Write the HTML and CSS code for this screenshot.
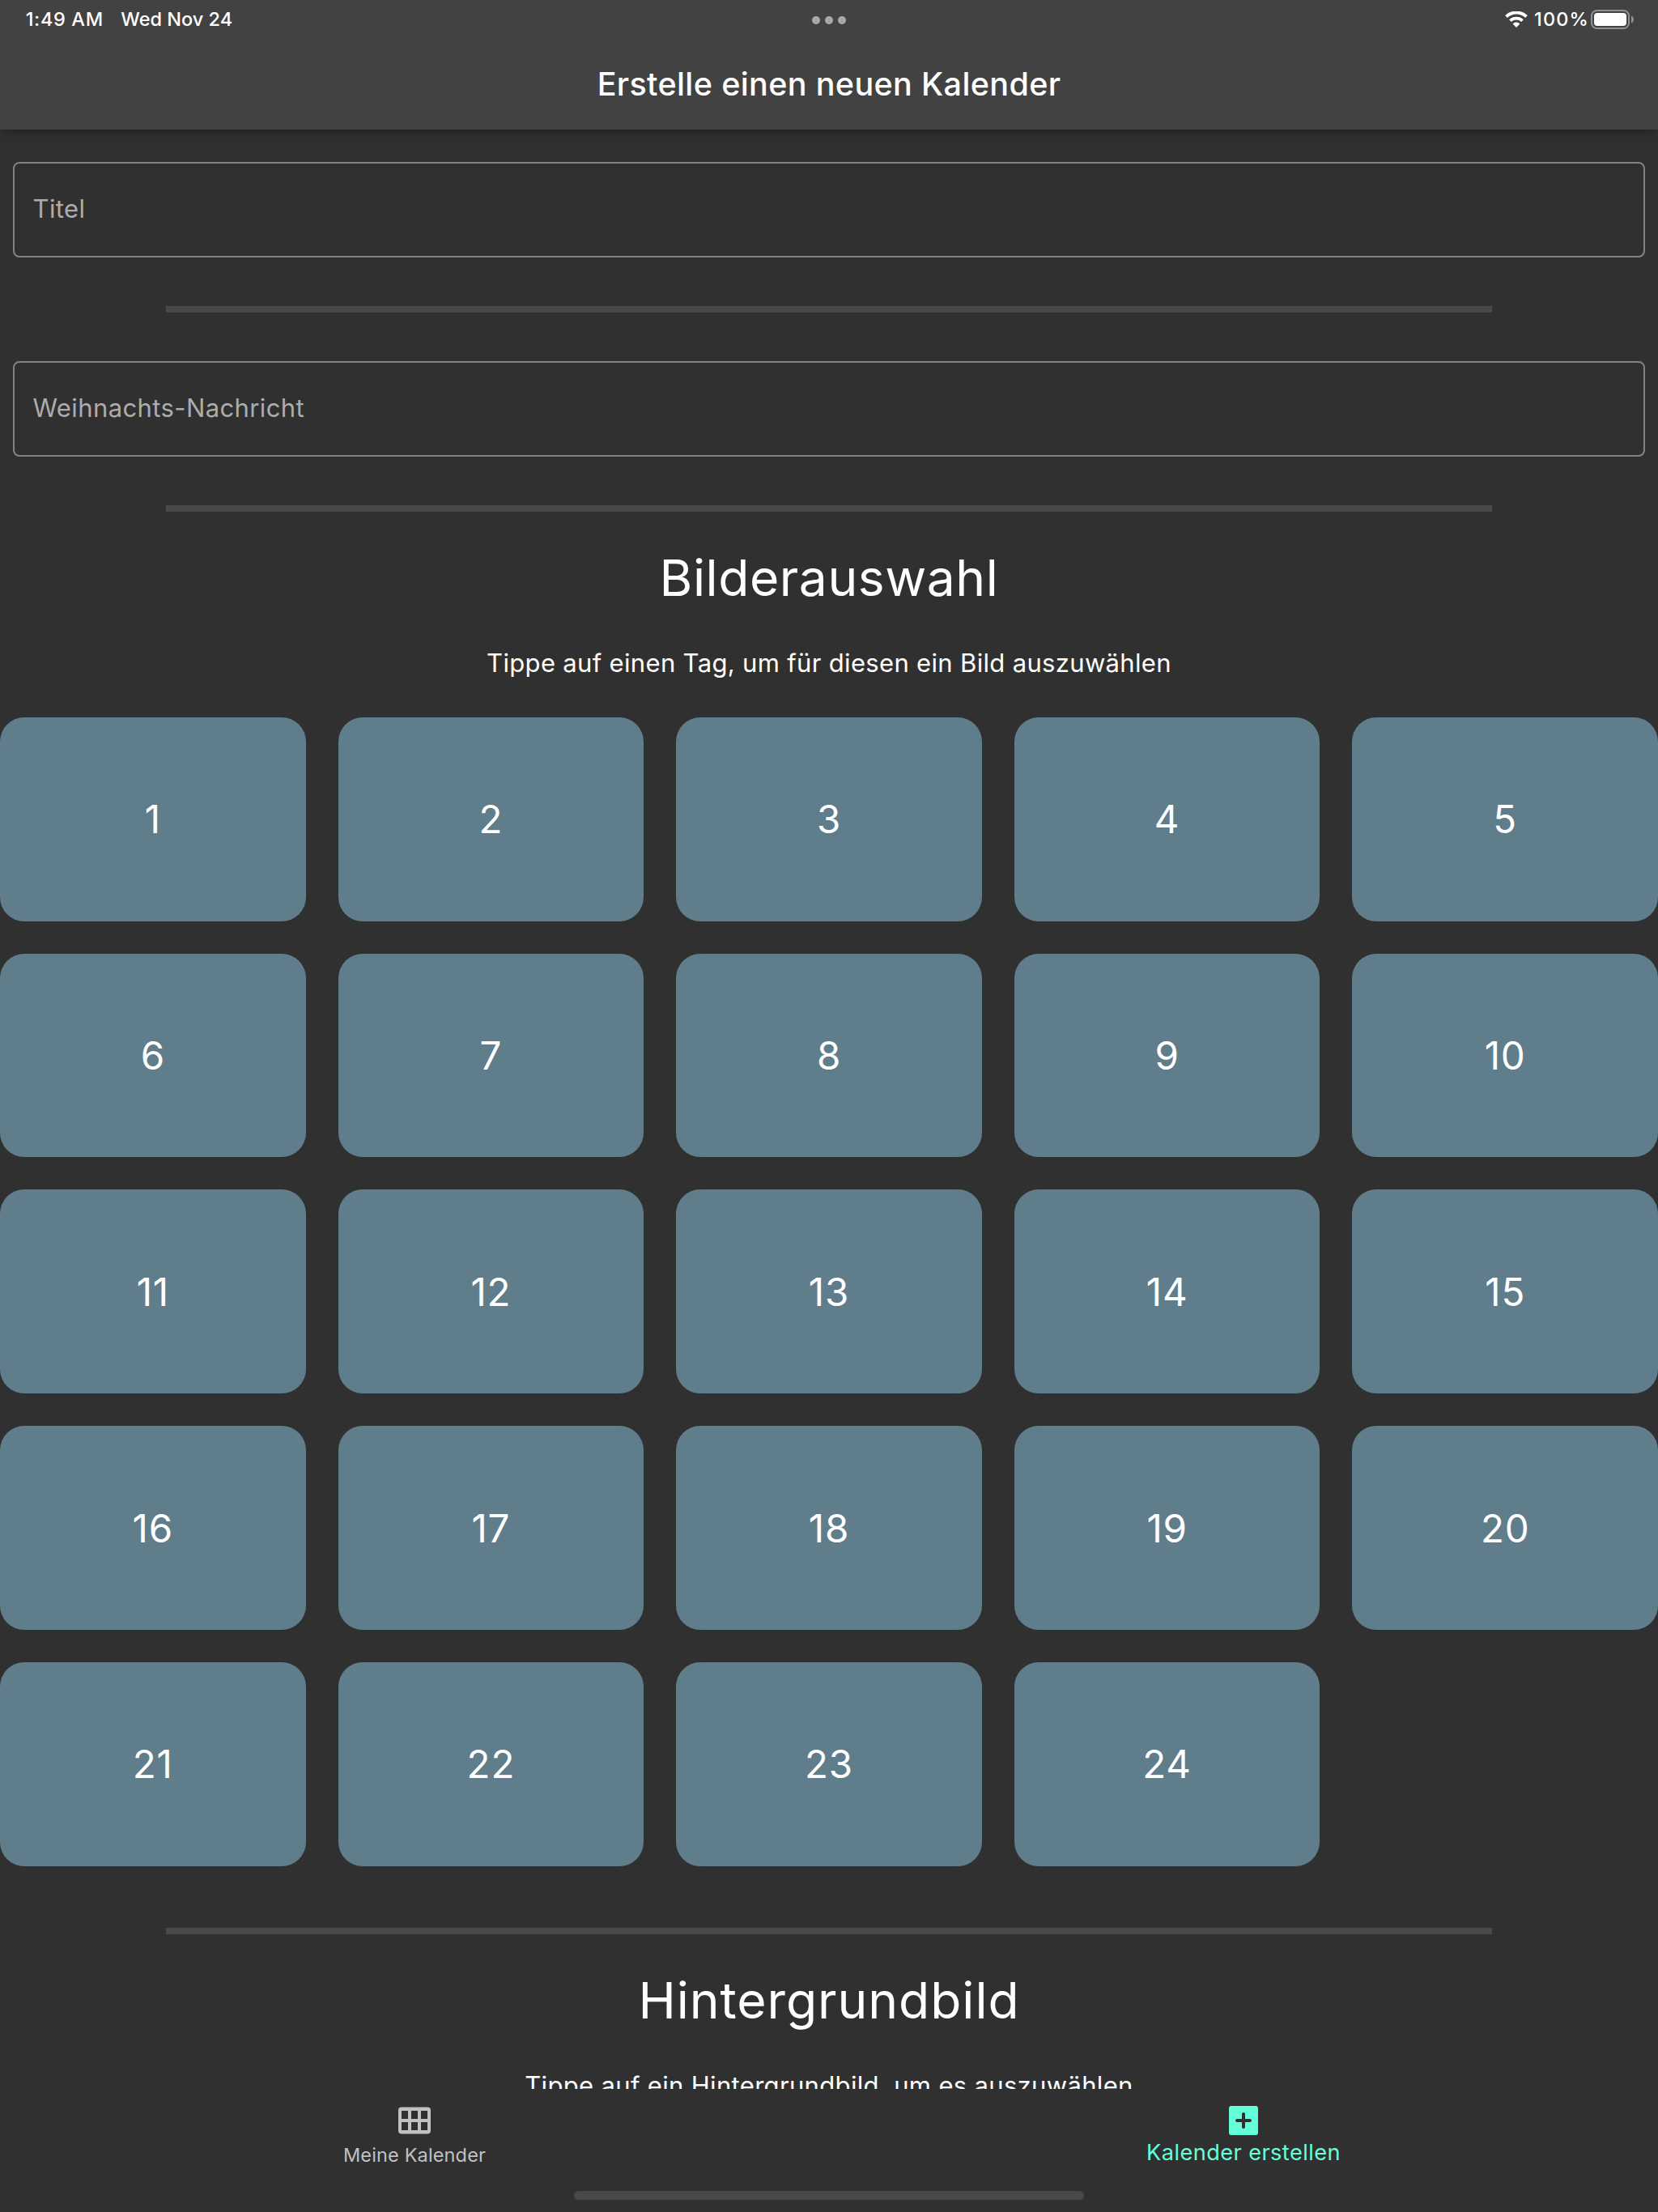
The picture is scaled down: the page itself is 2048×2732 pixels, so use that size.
FILE: index.html
```html
<!DOCTYPE html>
<html lang="de">
<head>
<meta charset="utf-8">
<title>Erstelle einen neuen Kalender</title>
<link rel="stylesheet" href="styles.css">
</head>
<body>
<header class="app-bar">
  <div class="status">
    <div class="status-side status-left">
      <span class="time">1:49 AM</span>
      <span class="date">Wed Nov 24</span>
    </div>
    <div class="dots"><i class="dot"></i><i class="dot"></i><i class="dot"></i></div>
    <div class="status-side status-right">
      <svg class="wifi" viewBox="0 0 28 20"><path d="M14 20l-3.700-3.700c-.6-.6-.5-1.200.1-1.600a6.400 6.400 0 0 1 7.200 0c.6.4.7 1 .1 1.600z"/><path class="arc" d="M6.500 11.600a11 11 0 0 1 15 0M1.500 6.500a18 18 0 0 1 25 0"/></svg>
      <span class="percent">100%</span>
      <svg class="battery" viewBox="0 0 54 24"><rect class="shell" x="1" y="1" width="46" height="22" rx="6.500"/><rect x="4" y="4" width="40" height="16" rx="4"/><path class="nub" d="M50 7.500c4 1.400 4 7.600 0 9z"/></svg>
    </div>
  </div>
  <h1 class="title">Erstelle einen neuen Kalender</h1>
</header>
<main class="content">
  <div class="field">Titel</div>
  <div class="divider"></div>
  <div class="field">Weihnachts-Nachricht</div>
  <div class="divider"></div>
  <h2 class="heading">Bilderauswahl</h2>
  <p class="hint">Tippe auf einen Tag, um für diesen ein Bild auszuwählen</p>
  <div class="days">
    <div class="day">1</div><div class="day">2</div><div class="day">3</div><div class="day">4</div><div class="day">5</div>
    <div class="day">6</div><div class="day">7</div><div class="day">8</div><div class="day">9</div><div class="day">10</div>
    <div class="day">11</div><div class="day">12</div><div class="day">13</div><div class="day">14</div><div class="day">15</div>
    <div class="day">16</div><div class="day">17</div><div class="day">18</div><div class="day">19</div><div class="day">20</div>
    <div class="day">21</div><div class="day">22</div><div class="day">23</div><div class="day">24</div>
  </div>
  <div class="divider divider-last"></div>
  <h2 class="heading heading-wide">Hintergrundbild</h2>
  <p class="hint">Tippe auf ein Hintergrundbild, um es auszuwählen</p>
</main>
<nav class="tabs">
  <a class="tab">
    <svg class="icon" viewBox="0 0 48 48"><path fill-rule="evenodd" d="M8 7.500h32a4 4 0 0 1 4 4v25a4 4 0 0 1-4 4H8a4 4 0 0 1-4-4v-25a4 4 0 0 1 4-4zM8 12v10h8V12zM20 12v10h8V12zM32 12v10h8V12zM8 26v10h8V26zM20 26v10h8V26zM32 26v10h8V26z"/></svg>
    <span class="label">Meine Kalender</span>
  </a>
  <a class="tab tab-active">
    <svg class="icon" viewBox="0 0 48 48"><path d="M9 6h30a3 3 0 0 1 3 3v30a3 3 0 0 1-3 3H9a3 3 0 0 1-3-3V9a3 3 0 0 1 3-3z"/><path class="plus" d="M24 16v16M16 24h16"/></svg>
    <span class="label">Kalender erstellen</span>
  </a>
  <div class="home-indicator"></div>
</nav>
</body>
</html>
```
FILE: styles.css
```css
* { box-sizing: border-box; }

body {
  margin: 0;
  width: 2048px;
  height: 2732px;
  display: flex;
  flex-direction: column;
  overflow: hidden;
  background: #303030;
  color: #fff;
  font-family: Inter, Roboto, sans-serif;
}

.app-bar {
  height: 160px;
  background: #424242;
  box-shadow: 0 4px 12px -2px rgba(0, 0, 0, .36);
  position: relative;
}

.status {
  height: 48px;
  padding: 0 29px;
  display: grid;
  grid-template-columns: 1fr auto 1fr;
  font-size: 23.5px;
  font-weight: 500;
  line-height: 47px;
}

.status-side { display: flex; }
.status-left { gap: 21.5px; padding-left: 2.7px; }
.status-right { justify-content: flex-end; align-items: flex-start; }
.time { letter-spacing: .662px; }
.percent { letter-spacing: 1.136px; }
.dots { display: flex; gap: 6px; padding-top: 20px; }
.dot { width: 10px; height: 10px; border-radius: 50%; background: #a8a8a8; }
.wifi { width: 28px; height: 20px; margin: 14px 8px 0 0; fill: #fff; }
.arc { fill: none; stroke: #fff; stroke-width: 3.9; }
.battery { width: 54px; height: 24px; margin: 12px 0 0 2px; fill: #fff; }
.shell { fill: none; stroke: #919191; stroke-width: 2; }
.nub { fill: #919191; }

.title {
  margin: 0;
  height: 112px;
  line-height: 112px;
  text-align: center;
  font-size: 39.5px;
  font-weight: 500;
  letter-spacing: .36px;
}

.content { height: 2420px; padding-top: 40px; overflow: hidden; }

.field {
  height: 118px;
  margin: 0 16px;
  padding: 0 0 3px 22.5px;
  display: flex;
  align-items: center;
  border: 2px solid #838383;
  border-radius: 8px;
  color: #acacac;
  font-size: 31px;
  letter-spacing: .39px;
}

.divider { height: 8px; margin: 60px 10%; background: #494949; }

.divider + .heading { margin-top: -60px; }

.heading {
  margin: 0;
  line-height: 163px;
  text-align: center;
  font-size: 62.3px;
  font-weight: 400;
  letter-spacing: .57px;
}

.heading-wide { letter-spacing: .97px; }

.hint {
  margin: 0;
  line-height: 47px;
  text-align: center;
  font-size: 31px;
  letter-spacing: .33px;
}

.days {
  margin-top: 44px;
  display: grid;
  grid-template-columns: repeat(5, 1fr);
  gap: 40px;
}

.day {
  aspect-ratio: 3 / 2;
  display: flex;
  align-items: center;
  justify-content: center;
  border-radius: 30px;
  background: #607d8b;
  font-size: 47.5px;
  letter-spacing: .8px;
}

.divider-last { margin-top: 76px; }

.tabs {
  height: 152px;
  display: grid;
  grid-template-columns: 1fr 1fr;
  background: #303030;
  position: relative;
}

.tab {
  padding-top: 15px;
  display: flex;
  flex-direction: column;
  align-items: center;
  color: #c1c1c1;
  font-size: 23.5px;
  letter-spacing: .14px;
}

.label { line-height: 37px; }
.tab-active { color: #64ffda; font-size: 27.2px; letter-spacing: .41px; }
.tab-active .label { line-height: 32px; }
.icon { width: 48px; height: 48px; fill: currentColor; }
.plus { fill: none; stroke: #303030; stroke-width: 4; stroke-linecap: round; }

.home-indicator {
  position: absolute;
  left: 709px;
  top: 126px;
  width: 630px;
  height: 11px;
  border-radius: 6px;
  background: #494949;
}
```
